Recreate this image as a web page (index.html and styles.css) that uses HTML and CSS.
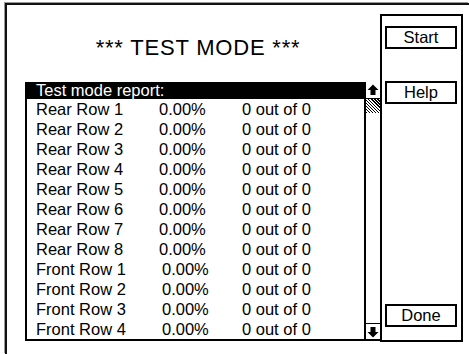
FILE: index.html
```html
<!DOCTYPE html>
<html lang="en">
<head>
  <meta charset="UTF-8" />
  <title>Test Mode</title>
  <link rel="stylesheet" href="styles.css">
</head>
<body>
<div class="frame">
  <div class="main">
    <h1 class="title">*** TEST MODE ***</h1>

    <div class="listbox">
      <div class="items">
        <div class="head">Test mode report:</div>
        <div class="row"><span>Rear Row 1</span><span>0.00%</span><span>0 out of 0</span></div>
        <div class="row"><span>Rear Row 2</span><span>0.00%</span><span>0 out of 0</span></div>
        <div class="row"><span>Rear Row 3</span><span>0.00%</span><span>0 out of 0</span></div>
        <div class="row"><span>Rear Row 4</span><span>0.00%</span><span>0 out of 0</span></div>
        <div class="row"><span>Rear Row 5</span><span>0.00%</span><span>0 out of 0</span></div>
        <div class="row"><span>Rear Row 6</span><span>0.00%</span><span>0 out of 0</span></div>
        <div class="row"><span>Rear Row 7</span><span>0.00%</span><span>0 out of 0</span></div>
        <div class="row"><span>Rear Row 8</span><span>0.00%</span><span>0 out of 0</span></div>
        <div class="row front"><span>Front Row 1</span><span>0.00%</span><span>0 out of 0</span></div>
        <div class="row front"><span>Front Row 2</span><span>0.00%</span><span>0 out of 0</span></div>
        <div class="row front"><span>Front Row 3</span><span>0.00%</span><span>0 out of 0</span></div>
        <div class="row front"><span>Front Row 4</span><span>0.00%</span><span>0 out of 0</span></div>
      </div>

      <div class="scrollbar">
        <div class="arrow up">
          <svg width="12" height="12" viewBox="0 0 12 12"><polygon points="6,0.5 11.5,6 8.5,6 8.5,11 3.5,11 3.5,6 0.5,6" fill="#000"/></svg>
        </div>
        <div class="thumb"></div>
        <div class="track"></div>
        <div class="arrow down">
          <svg width="12" height="12" viewBox="0 0 12 12"><polygon points="6,11.5 11.5,6 8.5,6 8.5,1 3.5,1 3.5,6 0.5,6" fill="#000"/></svg>
        </div>
      </div>
    </div>
  </div>

  <div class="side">
    <button class="btn start">Start</button>
    <button class="btn help">Help</button>
    <button class="btn done">Done</button>
  </div>
</div>
</body>
</html>
```

FILE: styles.css
```css
body {
  margin: 0;
  width: 469px;
  height: 354px;
  overflow: hidden;
  background: #fff;
  font-family: "Liberation Sans", Arial, sans-serif;
  font-size: 16.5px;
  color: #000;
}
/* the outer window runs past the right and bottom edges */
.frame {
  margin: 3px 0 0 5px;
  width: 464px;
  height: 351px;
  box-sizing: border-box;
  border-top: 2px solid #111;
  border-left: 2px solid #111;
  box-shadow: -1px -1px 0 #999;
  padding: 9px 0 0 18px;
  display: flex;
  align-items: flex-start;
}
.main {
  width: 355px;
  display: flex;
  flex-direction: column;
}
.title {
  height: 68px;
  margin: 0;
  padding-right: 9px;
  display: flex;
  align-items: center;
  justify-content: center;
  font-size: 22px;
  font-weight: normal;
  letter-spacing: 0.8px;
}
.listbox {
  height: 259px;
  box-sizing: border-box;
  border-left: 2px solid #000;
  border-bottom: 2px solid #000;
  display: flex;
}
.items {
  flex: 1;
  overflow: hidden;
}
.head {
  height: 17px;
  line-height: 17px;
  background: #000;
  color: #fff;
  padding-left: 9px;
}
.row {
  height: 20px;
  line-height: 20px;
  padding-left: 9px;
  display: grid;
  grid-template-columns: 123px 83px 1fr;
  white-space: nowrap;
}
.front span:nth-child(2) {
  padding-left: 3px;
}
.scrollbar {
  width: 14px;
  border-left: 2px solid #000;
  display: flex;
  flex-direction: column;
}
.arrow {
  height: 15px;
  display: flex;
  align-items: center;
  justify-content: center;
}
.arrow.up {
  height: 16px;
  border-bottom: 1px solid #000;
}
.arrow.down {
  border-top: 1px solid #000;
}
.thumb {
  height: 14px;
  background: repeating-linear-gradient(45deg, #000 0 1px, #fff 1px 2.2px);
}
.track {
  flex: 1;
}
.side {
  width: 83px;
  height: 328px;
  box-sizing: border-box;
  border: 2px solid #000;
  padding: 10px 4px 13px 3px;
  display: flex;
  flex-direction: column;
}
.btn {
  height: 23px;
  box-sizing: border-box;
  border: 2px solid #000;
  background: #fff;
  font-family: "Liberation Sans", Arial, sans-serif;
  font-size: 16.5px;
  color: #000;
  padding: 0;
  line-height: 19px;
}
.help {
  margin-top: 32px;
}
.done {
  margin-top: auto;
}
```
